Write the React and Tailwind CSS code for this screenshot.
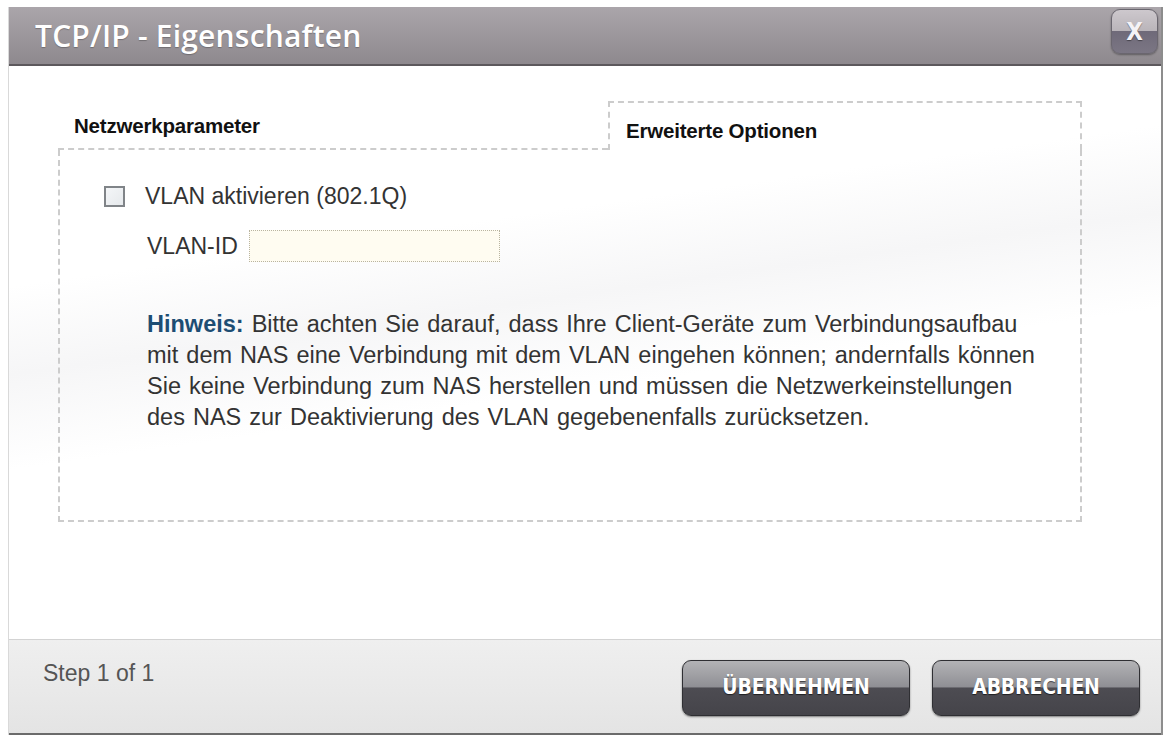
import React from "react";

function DialogButton({ label, width }) {
  return (
    <button
      className={`${width} h-[56px] rounded-[9px] border border-[#2f2f33] shadow-[0_1px_2px_rgba(0,0,0,0.45)] bg-[linear-gradient(#b3b3b6_0%,#8f8f94_48%,#4d4c52_50%,#45444a_100%)] flex items-center justify-center`}
    >
      <span
        className="text-white font-bold text-[21px] tracking-[-0.2px] [text-shadow:0_1px_1px_rgba(0,0,0,0.6)]"
        style={{ fontFamily: '"DejaVu Sans Condensed", "DejaVu Sans", sans-serif' }}
      >
        {label}
      </span>
    </button>
  );
}

export default function App() {
  const body = { fontFamily: '"Liberation Sans", Arial, sans-serif' };
  return (
    <div className="w-[1165px] h-[737px] bg-white pl-[8px] pr-[2px] pt-[7px] pb-[2px]" style={body}>
      <div className="h-full flex flex-col border-l border-[#d9d9d9] border-r-2 border-r-[#8d8d8d] bg-white">
        {/* Title bar */}
        <div className="h-[59px] shrink-0 flex items-center justify-between bg-[linear-gradient(#aaa5aa,#8e898e)] border-b-2 border-[#5c585c]">
          <span
            className="pl-[26px] text-white text-[30px] font-semibold tracking-[0.2px] leading-none [text-shadow:0_1px_1px_rgba(0,0,0,0.25)]"
            style={{ fontFamily: '"Open Sans", "DejaVu Sans", sans-serif' }}
          >
            TCP/IP - Eigenschaften
          </span>
          <div className="self-start mt-[2px] mr-[3px] w-[47px] h-[45px] rounded-[9px] border border-[#6a666f] bg-[linear-gradient(#cdc8cd_0%,#b9b4b9_50%,#6f6a79_50%,#7b7684_100%)] shadow-[0_1px_2px_rgba(0,0,0,0.35)] flex items-center justify-center">
            <span
              className="text-[#f4f2f6] text-[24px] font-bold leading-none [text-shadow:0_1px_1px_rgba(0,0,0,0.4)]"
              style={{ fontFamily: '"DejaVu Sans Condensed", "DejaVu Sans", sans-serif' }}
            >
              X
            </span>
          </div>
        </div>

        {/* Body */}
        <div className="flex-1 pt-[35px] pl-[49px] pr-[79px] bg-[linear-gradient(172deg,#ffffff_0%,#ffffff_30%,#f6f6f7_42%,#ffffff_55%,#ffffff_100%)]">
          {/* Tabs */}
          <div className="flex h-[49px]">
            <div className="w-[550px] border-b-2 border-dashed border-[#cccccc] flex items-center pt-[3px] pl-[16px]">
              <span className="font-bold text-[20.5px] text-[#111] tracking-[-0.2px]">Netzwerkparameter</span>
            </div>
            <div className="flex-1 border-t-2 border-l-2 border-r-2 border-dashed border-[#cccccc] flex items-center pt-[9px] pl-[16px]">
              <span className="font-bold text-[20.5px] text-[#111] tracking-[-0.2px]">Erweiterte Optionen</span>
            </div>
          </div>

          {/* Content */}
          <div className="h-[372px] border-l-2 border-r-2 border-b-2 border-dashed border-[#cccccc] pl-[44px] pt-[35px]">
            <div className="flex items-center h-[22px]">
              <div className="w-[21px] h-[21px] border-2 border-[#808488] bg-[linear-gradient(135deg,#f4f6f8,#e6e9ec)]" />
              <span className="ml-[20px] text-[23px] text-[#333]">VLAN aktivieren (802.1Q)</span>
            </div>
            <div className="flex items-center mt-[23px] h-[32px]">
              <span className="ml-[43px] text-[23px] text-[#333]">VLAN-ID</span>
              <div className="ml-[11px] w-[251px] h-[32px] border border-dotted border-[#b9b4a0] bg-[#fffcf1]" />
            </div>
            <p className="mt-[47px] ml-[43px] text-[23.5px] leading-[31px] text-[#333] [word-spacing:1.5px]">
              <span className="font-bold text-[#1d4d73]">Hinweis:</span> Bitte achten Sie darauf, dass Ihre Client-Geräte zum Verbindungsaufbau
              <br />
              mit dem NAS eine Verbindung mit dem VLAN eingehen können; andernfalls können
              <br />
              Sie keine Verbindung zum NAS herstellen und müssen die Netzwerkeinstellungen
              <br />
              des NAS zur Deaktivierung des VLAN gegebenenfalls zurücksetzen.
            </p>
          </div>
        </div>

        {/* Footer */}
        <div className="h-[96px] shrink-0 border-t border-[#d3d3d3] border-b-2 border-b-[#6b6b6b] bg-[linear-gradient(#efefef,#e4e4e4)] flex items-start justify-between pl-[34px] pr-[21px]">
          <span className="mt-[16px] text-[23px] text-[#555]">Step 1 of 1</span>
          <div className="flex gap-[22px] mt-[20px]">
            <DialogButton label="ÜBERNEHMEN" width="w-[228px]" />
            <DialogButton label="ABBRECHEN" width="w-[208px]" />
          </div>
        </div>
      </div>
    </div>
  );
}
